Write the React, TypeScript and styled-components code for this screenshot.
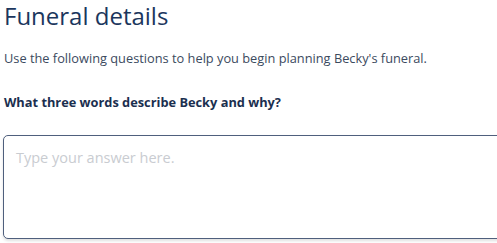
import styled, { createGlobalStyle } from 'styled-components';

const GlobalStyle = createGlobalStyle`
  html, body {
    margin: 0;
    padding: 0;
    background: #ffffff;
  }
  body {
    font-family: "Open Sans", "Noto Sans", sans-serif;
    color: #1d3557;
  }
`;

const Page = styled.div`
  padding: 0 0 0 4px;
  width: 497px;
  height: 243px;
  overflow: hidden;
  box-sizing: border-box;
`;

const Title = styled.h1`
  margin: 0;
  font-size: 24px;
  line-height: 32px;
  font-weight: 400;
  color: #1b365d;
`;

const Intro = styled.p`
  margin: 16px 0 0;
  font-size: 12.8px;
  line-height: 20px;
  color: #3b4a5e;
`;

const Question = styled.label`
  display: block;
  margin-top: 24px;
  font-size: 12.8px;
  line-height: 20px;
  font-weight: 700;
  color: #1b2f4f;
`;

const Answer = styled.textarea`
  display: block;
  box-sizing: border-box;
  margin: 23px 0 0 -1px;
  width: 520px;
  height: 104px;
  padding: 12px 12px;
  border: 1px solid #4f5f7d;
  border-radius: 5px;
  box-shadow: 0 2px 3px rgba(0, 0, 0, 0.12);
  font-family: "Open Sans", "Noto Sans", sans-serif;
  font-size: 14.5px;
  line-height: 20px;
  color: #1b365d;
  caret-color: #1b365d;
  resize: none;
  outline: none;

  &::placeholder {
    color: #c9ccd1;
  }
`;

export default function App() {
  return (
    <Page>
      <GlobalStyle />
      <Title>Funeral details</Title>
      <Intro>Use the following questions to help you begin planning Becky&apos;s funeral.</Intro>
      <Question htmlFor="words">What three words describe Becky and why?</Question>
      <Answer id="words" placeholder="Type your answer here." autoFocus />
    </Page>
  );
}
